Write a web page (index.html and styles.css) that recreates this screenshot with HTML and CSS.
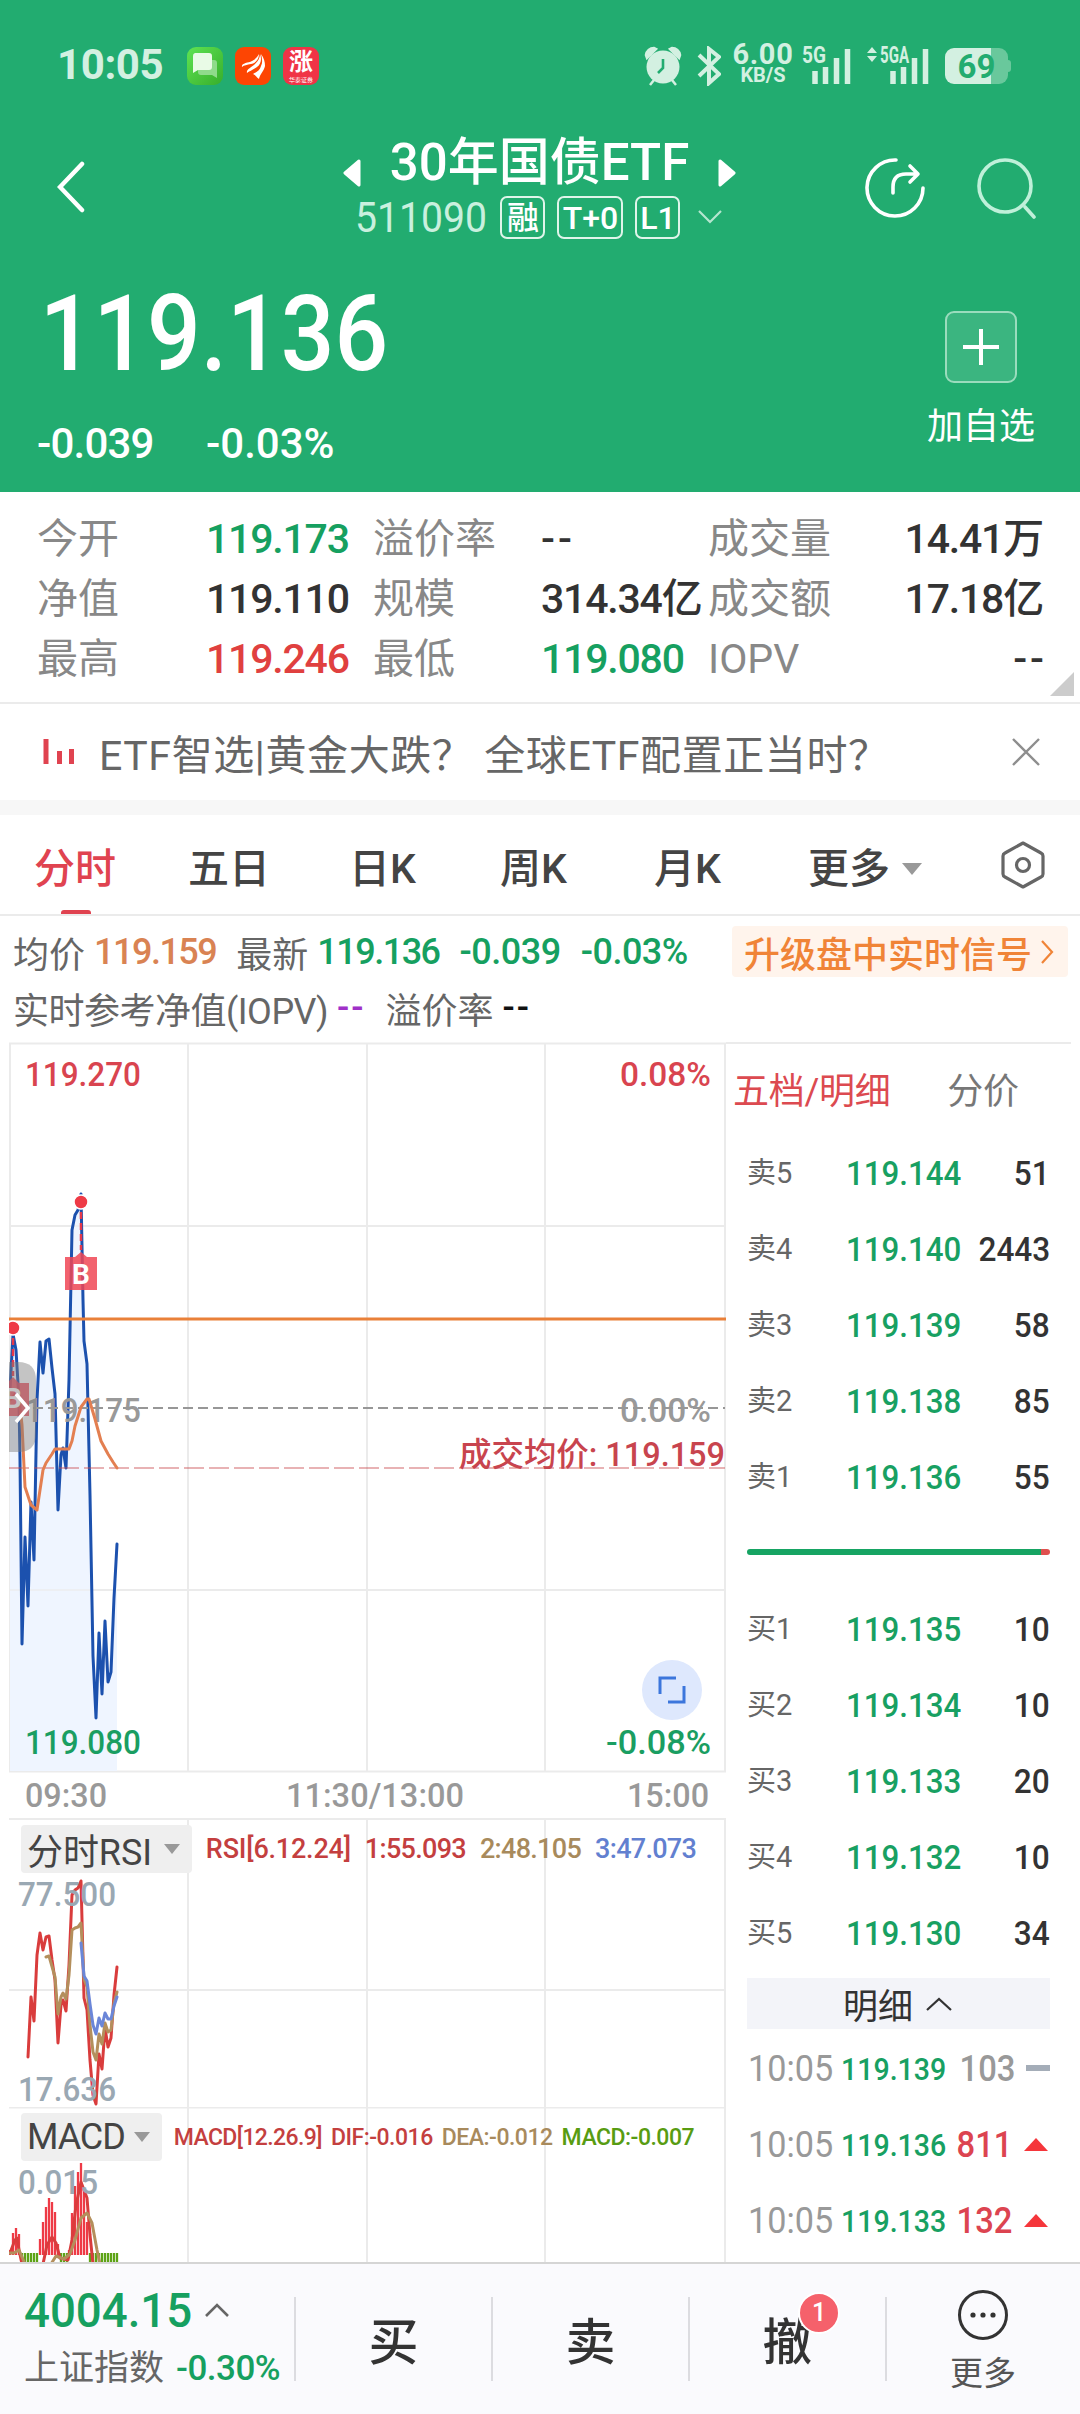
FILE: index.html
```html
<!DOCTYPE html>
<html lang="zh-CN">
<head>
    <meta charset="UTF-8">
    <meta name="viewport" content="width=device-width, initial-scale=1.0">
    <title>30年国债ETF 511090</title>
    <link rel="stylesheet" href="styles.css">
</head>
<body>
    <header class="header">
        <div class="status-bar">
            <span class="clock">10:05</span>
            <div class="app-icons">
                <svg width="36" height="38" viewBox="0 0 36 38">
                    <defs><linearGradient id="msg" x1="0" y1="0" x2="1" y2="1"><stop offset="0" stop-color="#5fe353"/><stop offset="1" stop-color="#37ae2b"/></linearGradient></defs>
                    <rect width="36" height="38" rx="9" fill="url(#msg)"/>
                    <path d="M14 13h13a3 3 0 0 1 3 3v15l-5-3H14a3 3 0 0 1-3-3V16a3 3 0 0 1 3-3z" fill="#8fdb8b"/>
                    <path d="M8 6h14a3 3 0 0 1 3 3v11a3 3 0 0 1-3 3H11l-5 3V9a3 3 0 0 1 2-3z" fill="#e9fbe6"/>
                </svg>
                <svg width="36" height="38" viewBox="0 0 36 38">
                    <rect width="36" height="38" rx="9" fill="#fd4503"/>
                    <path d="M7 20c-1-4 6-4 10-6 4-2 6-5 7-7 0 6-4 9-8 10s-7 1-9 3z" fill="#fff"/>
                    <path d="M12 26c-1-4 4-5 8-9 3-3 5-6 5-10 2 5 1 10-3 13-4 3-8 4-10 6z" fill="#fff"/>
                    <path d="M24 32c-3-2-3-4-6-5 4-2 7-4 8-8 2-4 1-8 0-12 3 4 4 8 4 12-1 5-5 8-6 13z" fill="#fff"/>
                </svg>
                <div class="app-zhang"><b>涨</b><i>华泰证券</i></div>
            </div>
            <div class="status-right">
                <svg class="alarm" width="38" height="40" viewBox="0 0 38 40">
                    <circle cx="19" cy="21" r="16.5" fill="#d3f0e1"/>
                    <path d="M2 9a8 8 0 0 1 8-7l2 1-9 9zM36 9a8 8 0 0 0-8-7l-2 1 9 9zM10 34l-4 5M28 34l4 5" fill="#d3f0e1" stroke="#d3f0e1" stroke-width="2.5"/>
                    <path d="M19 13v9l-5 5" fill="none" stroke="#22ac70" stroke-width="2.6"/>
                </svg>
                <svg class="bluetooth" width="24" height="40" viewBox="0 0 24 40">
                    <path d="M2 9l20 19-10 9V3l10 8L2 30" fill="none" stroke="#d3f0e1" stroke-width="4"/>
                </svg>
                <div class="speed"><span>6.00</span><small>KB/S</small></div>
                <svg class="signal" width="50" height="40" viewBox="0 0 50 40">
                    <text x="0" y="18" textLength="24" lengthAdjust="spacingAndGlyphs">5G</text>
                    <path d="M13 39V26M23.500 39V22M34.500 39V13M45.500 39V4" class="signal-bars"/>
                </svg>
                <svg class="signal signal-2" width="62" height="40" viewBox="0 0 62 40">
                    <path d="M0 8l5-6 5 6zM0 11h10l-5 6z" fill="#d3f0e1"/>
                    <text x="13" y="18" textLength="29" lengthAdjust="spacingAndGlyphs">5GA</text>
                    <path d="M26 39V26M36.500 39V22M47.500 39V13M58.500 39V4" class="signal-bars"/>
                </svg>
                <div class="battery"><span>69</span></div>
            </div>
        </div>

        <nav class="nav">
            <svg class="back" width="29" height="54" viewBox="0 0 29 54"><path d="M25 4L3 27l22 23" fill="none" stroke="#fff" stroke-width="4.500" stroke-linecap="round"/></svg>
            <div class="nav-center">
                <div class="title-row">
                    <svg width="18" height="28" viewBox="0 0 18 28"><path d="M16 2L2 14l14 12z" fill="#fff" stroke="#fff" stroke-width="3" stroke-linejoin="round"/></svg>
                    <h1>30年国债ETF</h1>
                    <svg width="18" height="28" viewBox="0 0 18 28"><path d="M2 2l14 12L2 26z" fill="#fff" stroke="#fff" stroke-width="3" stroke-linejoin="round"/></svg>
                </div>
                <div class="code-row">
                    <span class="code">511090</span>
                    <span class="tag">融</span>
                    <span class="tag tag-wide">T+0</span>
                    <span class="tag">L1</span>
                    <svg width="26" height="16" viewBox="0 0 26 16"><path d="M2 2l11 11L24 2" fill="none" stroke="#b5e6cf" stroke-width="2.200"/></svg>
                </div>
            </div>
            <div class="nav-icons">
                <svg width="60" height="62" viewBox="0 0 60 62" fill="none" stroke="#fff" stroke-width="3.600" stroke-linecap="round" stroke-linejoin="round">
                    <path d="M31 3a28 28 0 1 0 27 28"/><path d="M28 36v-6q0-13 13-13h11M45 9l8 8-8 8"/>
                </svg>
                <svg width="60" height="62" viewBox="0 0 60 62" fill="none" stroke="#bff0d9" stroke-width="3.600" stroke-linecap="round">
                    <circle cx="28" cy="29" r="26"/><path d="M48 50l9 10"/>
                </svg>
            </div>
        </nav>

        <div class="quote">
            <div>
                <div class="price">119.136</div>
                <div class="change"><span>-0.039</span><span>-0.03%</span></div>
            </div>
            <div class="add">
                <div class="add-box"><svg width="36" height="36" viewBox="0 0 36 36"><path d="M18 0v36M0 18h36" stroke="#fff" stroke-width="4"/></svg></div>
                <span>加自选</span>
            </div>
        </div>
    </header>

    <section class="stats">
        <span class="label">今开</span><span class="green">119.173</span><span class="label">溢价率</span><span class="none">--</span><span class="label">成交量</span><span class="right">14.41万</span>
        <span class="label">净值</span><span>119.110</span><span class="label">规模</span><span>314.34亿</span><span class="label">成交额</span><span class="right">17.18亿</span>
        <span class="label">最高</span><span class="red">119.246</span><span class="label">最低</span><span class="green">119.080</span><span class="label">IOPV</span><span class="right none">--</span>
        <i class="corner"></i>
    </section>

    <section class="notice">
        <svg width="32" height="28" viewBox="0 0 32 28"><path d="M3 1v25M16.500 13v13M28.500 11v15" stroke="#e04350" stroke-width="5"/></svg>
        <p>ETF智选|黄金大跌？ 全球ETF配置正当时？</p>
        <svg width="28" height="28" viewBox="0 0 28 28"><path d="M1 1l26 26M27 1L1 27" stroke="#8e8e8e" stroke-width="2.400"/></svg>
    </section>

    <nav class="tabs">
        <a class="active">分时</a>
        <a>五日</a>
        <a>日K</a>
        <a>周K</a>
        <a>月K</a>
        <a>更多<i class="caret"></i></a>
        <svg width="44" height="48" viewBox="0 0 44 48" fill="none" stroke="#666" stroke-width="3.200" stroke-linejoin="round"><path d="M22 2l18 10q2 1 2 3v18q0 2-2 3L22 46 4 36q-2-1-2-3V15q0-2 2-3z"/><circle cx="22" cy="24" r="6.500"/></svg>
    </nav>

    <section class="info">
        <div class="info-row">
            <span>均价</span><span class="num orange">119.159</span><span class="latest">最新</span><span class="num green">119.136</span><span class="num green chg">-0.039</span><span class="num green chg">-0.03%</span>
            <a class="upgrade">升级盘中实时信号<svg width="14" height="26" viewBox="0 0 14 26"><path d="M2 2l10 11L2 24" fill="none" stroke="#f08437" stroke-width="2.200"/></svg></a>
        </div>
        <div class="info-row second">
            <span class="iopv">实时参考净值(IOPV)</span><span class="num none purple">--</span><span class="latest">溢价率</span><span class="num none black">--</span>
        </div>
    </section>

    <main class="main">
        <div class="charts">
            <!-- minute price chart -->
            <div class="panel price-panel">
                <svg width="717" height="776" viewBox="9 1042 717 776">
                    <path class="grid" d="M9 1043.500h717M10 1043v728M188 1043v728M367 1043v728M545 1043v728M725 1043v728M9 1226h717M9 1590h717M9 1771.500h717"/>
                    <path fill="#eff5ff" d="M10 1771V1390L13 1334 16 1350 19 1400 20 1460 22 1644 25 1537 28 1606 31 1502 34 1560 37 1400 40 1342 43 1373 46 1341 49 1339 52 1368 55 1394 58 1510 61 1455 63 1448 66 1468 69 1380 72 1230 75 1215 78 1210 81 1194 83 1300 84 1341 87 1364 90 1495 93 1656 96 1718 99 1633 102 1694 105 1621 108 1682 111 1672 114 1598 117 1544V1771z"/>
                    <path class="grid" opacity=".6" d="M9 1226h110M9 1590h110"/>
                    <path class="line" stroke="#1c51ae" stroke-width="3.600" d="M10 1390L13 1334 16 1350 19 1400 20 1460 22 1644 25 1537 28 1606 31 1502 34 1560 37 1400 40 1342 43 1373 46 1341 49 1339 52 1368 55 1394 58 1510 61 1455 63 1448 66 1468 69 1380 72 1230 75 1215 78 1210 81 1194 83 1300 84 1341 87 1364 90 1495 93 1656 96 1718 99 1633 102 1694 105 1621 108 1682 111 1672 114 1598 117 1544"/>
                    <text class="axis gray" x="25" y="1422" textLength="116" lengthAdjust="spacingAndGlyphs">119.175</text>
                    <text class="axis gray end" x="711" y="1422" textLength="91" lengthAdjust="spacingAndGlyphs">0.00%</text>
                    <path d="M33 1408H725" stroke="#979797" stroke-width="2" stroke-dasharray="10 5"/>
                    <path d="M9 1468H725" stroke="#c9484d" stroke-opacity=".42" stroke-width="2" stroke-dasharray="20 5"/>
                    <path class="line" stroke="#e37f51" stroke-width="3" d="M10 1400L18 1391 22 1425 25 1487 31 1505 37 1510 43 1470 46 1463 52 1454 55 1449 69 1449 72 1441 75 1426 81 1407 87 1399 89 1399 95 1419 101 1441 108 1454 113 1462 117 1468"/>
                    <path d="M9 1319H726" stroke="#e98039" stroke-width="3"/>
                    <path d="M81 1212v38M13 1338v38" stroke="#e6394a" stroke-width="2.500" stroke-dasharray="7 4"/>
                    <circle cx="81" cy="1202" r="7" fill="#ee3a46" stroke="#fff" stroke-width="1.500"/>
                    <circle cx="13" cy="1328" r="7" fill="#ee3a46" stroke="#fff" stroke-width="1.500"/>
                    <path d="M65 1257h10l6-5 6 5h10v33H65z" fill="#f04655" fill-opacity=".85"/>
                    <text class="mark" x="81" y="1284">B</text>
                    <path d="M9 1381l4-4 6 6h10v33H9z" fill="#f04655" fill-opacity=".85"/>
                    <text class="mark" x="13" y="1408">B</text>
                    <path d="M9 1362h9q18 0 18 18v54q0 18-18 18H9z" fill="#7d7d7d" fill-opacity=".45"/>
                    <path d="M16 1394l12 14-12 14" fill="none" stroke="#fff" stroke-width="3.500"/>
                    <text class="axis up" x="25" y="1086" textLength="116" lengthAdjust="spacingAndGlyphs">119.270</text>
                    <text class="axis up end" x="711" y="1086" textLength="91" lengthAdjust="spacingAndGlyphs">0.08%</text>
                    <text class="axis down" x="25" y="1754" textLength="116" lengthAdjust="spacingAndGlyphs">119.080</text>
                    <text class="axis down end" x="711" y="1754" textLength="105" lengthAdjust="spacingAndGlyphs">-0.08%</text>
                    <text class="axis cost end" x="725" y="1466" textLength="266" lengthAdjust="spacingAndGlyphs">成交均价: 119.159</text>
                    <circle cx="672" cy="1690" r="30" fill="#dee8fd"/>
                    <path d="M676 1678h-16v16M668 1702h16v-16" fill="none" stroke="#3c76dc" stroke-width="3"/>
                    <text class="axis gray" x="25" y="1807" textLength="82" lengthAdjust="spacingAndGlyphs">09:30</text>
                    <text class="axis gray middle" x="375" y="1807" textLength="178" lengthAdjust="spacingAndGlyphs">11:30/13:00</text>
                    <text class="axis gray end" x="709" y="1807" textLength="82" lengthAdjust="spacingAndGlyphs">15:00</text>
                </svg>
            </div>

            <div class="panel rsi-panel">
                <svg width="717" height="289" viewBox="9 1818 717 289">
                    <path class="grid" d="M9 1819h717M188 1819v288M367 1819v288M545 1819v288M725 1819v288M9 1990h717"/>
                    <path class="line" stroke="#d93c3c" d="M28 2057L31 1997 34 2021 37 1955 40 1933 43 1950 46 1937 49 1936 52 1960 55 1980 58 2043 61 2005 63 2000 66 2011 69 1965 72 1895 75 1890 78 1888 81 1881 84 1998 87 2010 90 2060 93 2095 96 2104 99 2054 102 2069 105 2028 108 2047 111 2038 114 1995 117 1967"/>
                    <path class="line" stroke="#b48f5c" d="M46 1957L49 1956 55 1977 58 2014 61 1997 63 1993 66 1999 69 1975 72 1930 75 1928 78 1927 81 1923 84 1979 87 1987 90 2025 93 2052 96 2060 99 2034 102 2044 105 2023 108 2032 111 2030 114 2003 117 1992"/>
                    <path class="line" stroke="#6b86d8" d="M81 1943L84 1976 87 1981 90 2004 93 2025 96 2034 99 2018 102 2026 105 2013 108 2019 111 2019 114 2006 117 1997"/>
                    <text class="axis scale" x="18" y="1906" textLength="98" lengthAdjust="spacingAndGlyphs">77.500</text>
                    <text class="axis scale" x="18" y="2101" textLength="98" lengthAdjust="spacingAndGlyphs">17.636</text>
                </svg>
                <div class="legend">
                    <span class="picker">分时RSI<i class="caret"></i></span>
                    <span class="c-red">RSI[6.12.24]</span><span class="c-red">1:55.093</span><span class="c-tan">2:48.105</span><span class="c-blue">3:47.073</span>
                </div>
            </div>

            <div class="panel macd-panel">
                <svg width="717" height="155" viewBox="9 2107 717 155">
                    <path class="grid" d="M9 2107.500h717M188 2107v156M367 2107v156M545 2107v156M725 2107v156"/>
                    <path stroke="#ee3a46" stroke-width="2.300" d="M10 2255v-5M13 2255v-22M16 2255v-27M19 2255v-21M40 2255v-16M43 2255v-33M46 2255v-48M49 2255v-57M52 2255v-53M55 2255v-43M58 2255v-11M69 2255v-5M72 2255v-42M75 2255v-69M78 2255v-83M81 2255v-92M84 2255v-65M87 2255v-33"/>
                    <path stroke="#5da316" stroke-width="2.300" d="M22 2253v9M25 2253v9M28 2253v9M31 2253v9M34 2253v9M37 2253v9M61 2253v9M64 2253v9M67 2253v9M90 2253v9M93 2253v9M96 2253v9M99 2253v9M102 2253v9M105 2253v9M108 2253v9M111 2253v9M114 2253v9M117 2253v9"/>
                    <path class="line" stroke="#d93c3c" d="M10 2253L15 2240 17 2238 19 2250 22 2264M43 2264L47 2245 52 2237 56 2243 60 2258 68 2260 72 2240 76 2205 81 2182 87 2198 90 2235 93 2264"/>
                    <path class="line" stroke="#b48f5c" d="M10 2253L14 2253 19 2250 25 2264M51 2264L56 2256 64 2259 70 2254 75 2240 81 2218 87 2213 92 2223 97 2250 100 2264"/>
                    <text class="axis scale" x="18" y="2194" textLength="80" lengthAdjust="spacingAndGlyphs">0.015</text>
                </svg>
                <div class="legend legend-macd">
                    <span class="picker">MACD<i class="caret"></i></span>
                    <span class="c-red">MACD[12.26.9]</span><span class="c-red">DIF:-0.016</span><span class="c-tan">DEA:-0.012</span><span class="c-green">MACD:-0.007</span>
                </div>
            </div>
        </div>

        <aside class="depth">
            <div class="depth-tabs"><a class="active">五档/明细</a><a>分价</a></div>
            <div class="book">
                <div class="level"><span>卖5</span><b>119.144</b><em>51</em></div>
                <div class="level"><span>卖4</span><b>119.140</b><em>2443</em></div>
                <div class="level"><span>卖3</span><b>119.139</b><em>58</em></div>
                <div class="level"><span>卖2</span><b>119.138</b><em>85</em></div>
                <div class="level"><span>卖1</span><b>119.136</b><em>55</em></div>
                <div class="ratio"><i></i></div>
                <div class="level"><span>买1</span><b>119.135</b><em>10</em></div>
                <div class="level"><span>买2</span><b>119.134</b><em>10</em></div>
                <div class="level"><span>买3</span><b>119.133</b><em>20</em></div>
                <div class="level"><span>买4</span><b>119.132</b><em>10</em></div>
                <div class="level"><span>买5</span><b>119.130</b><em>34</em></div>
            </div>
            <div class="detail-head">明细<svg width="26" height="14" viewBox="0 0 26 14"><path d="M1 13L13 2l12 11" fill="none" stroke="#333" stroke-width="2.200"/></svg></div>
            <div class="tick"><span>10:05</span><b>119.139</b><em class="flat">103</em><i class="dash"></i></div>
            <div class="tick"><span>10:05</span><b>119.136</b><em>811</em><i class="up-arrow"></i></div>
            <div class="tick"><span>10:05</span><b>119.133</b><em>132</em><i class="up-arrow"></i></div>
        </aside>
    </main>

    <footer class="footer">
        <div class="index">
            <div class="index-value"><span>4004.15</span><svg width="24" height="15" viewBox="0 0 24 15"><path d="M1 13L12 2l11 11" fill="none" stroke="#666" stroke-width="2.600"/></svg></div>
            <div class="index-name">上证指数<span>-0.30%</span></div>
        </div>
        <a class="action">买</a>
        <a class="action">卖</a>
        <a class="action">撤<span class="badge">1</span></a>
        <a class="more">
            <svg width="52" height="52" viewBox="0 0 52 52"><circle cx="26" cy="26" r="23.500" fill="none" stroke="#333" stroke-width="3"/><circle cx="16" cy="26" r="2.600" fill="#333"/><circle cx="26" cy="26" r="2.600" fill="#333"/><circle cx="36" cy="26" r="2.600" fill="#333"/></svg>
            <span>更多</span>
        </a>
    </footer>
</body>
</html>
```
FILE: styles.css
```css
* {
    box-sizing: border-box;
}
body {
    margin: 0;
    width: 1080px;
    height: 2414px;
    overflow: hidden;
    background: #fff;
    color: #333;
    font-family: Roboto, "Noto Sans CJK SC", sans-serif;
}
svg {
    display: block;
    flex: none;
}
i, em {
    font-style: normal;
}
b {
    font-weight: 500;
}
.green { color: #16a060; }
.red { color: #e0403f; }
.orange { color: #d98353; }
.purple { color: #a030c8; }
.black { color: #111; }

/* header */
.header {
    height: 492px;
    background: #22ac70;
    color: #fff;
}
.status-bar {
    display: flex;
    align-items: center;
    height: 132px;
    padding: 0 72px 4px 57px;
    color: #d3f0e1;
}
.clock {
    width: 130px;
    font-size: 42px;
    font-weight: 700;
    letter-spacing: -.4px;
}
.app-icons {
    display: flex;
    gap: 12px;
    margin-top: 4px;
}
.app-zhang {
    width: 36px;
    height: 38px;
    border-radius: 9px;
    background: #f03446;
    color: #fff;
    text-align: center;
    overflow: hidden;
}
.app-zhang b {
    display: block;
    font-size: 24px;
    font-weight: 700;
    line-height: 30px;
}
.app-zhang i {
    display: block;
    font-size: 6px;
    line-height: 5px;
}
.status-right {
    display: flex;
    align-items: center;
    margin-left: auto;
}
.alarm, .bluetooth {
    margin-top: 3px;
}
.bluetooth {
    margin-left: 15px;
}
.speed {
    display: flex;
    flex-direction: column;
    align-items: center;
    width: 62px;
    margin: 0 8px 0 11px;
    font-weight: 700;
}
.speed span {
    font-size: 29px;
    line-height: 23px;
    letter-spacing: .7px;
}
.speed small {
    font-size: 20px;
    line-height: 19px;
}
.signal {
    overflow: visible;
    margin-top: 2px;
}
.signal text {
    font-size: 23px;
    font-weight: 700;
    fill: #d3f0e1;
}
.signal-bars {
    stroke: #d3f0e1;
    stroke-width: 5.5;
    fill: none;
}
.signal-2 {
    margin-left: 15px;
}
.battery {
    position: relative;
    width: 63px;
    height: 36px;
    margin-top: 3px;
    margin-left: 16px;
    border-radius: 9px;
    background: linear-gradient(90deg, #d3f0e1 46px, #69c89c 46px);
    color: #22ac70;
    font-size: 33px;
    font-weight: 700;
    line-height: 37px;
    text-align: center;
}
.battery::after {
    content: "";
    position: absolute;
    right: -3px;
    top: 12px;
    width: 3px;
    height: 12px;
    border-radius: 0 3px 3px 0;
    background: #69c89c;
}

.nav {
    display: grid;
    grid-template-columns: 1fr auto 1fr;
    height: 128px;
    padding: 0 43px 0 57px;
}
.back {
    margin-top: 28px;
}
.nav-center {
    display: flex;
    flex-direction: column;
    align-items: center;
    margin-left: -15px;
}
.title-row {
    display: flex;
    align-items: center;
    height: 64px;
    gap: 29px;
}
.title-row svg {
    margin-top: 17px;
}
.title-row h1 {
    margin: -2px 0 0;
    font-size: 51px;
    font-weight: 500;
    line-height: 64px;
}
.code-row {
    display: flex;
    align-items: center;
    height: 52px;
    margin-top: -5px;
}
.code {
    margin-right: 0;
    font-size: 43px;
    color: #c9f0de;
    line-height: 52px;
    transform: scaleX(.91);
    transform-origin: left;
}
.tag {
    width: 45px;
    height: 43px;
    margin-right: 12px;
    border: 2px solid #dff5ea;
    border-radius: 7px;
    font-size: 32px;
    font-weight: 500;
    line-height: 40px;
    text-align: center;
}
.tag-wide {
    width: 66px;
}
.code-row svg {
    margin-left: 5px;
}
.nav-icons {
    display: flex;
    justify-content: flex-end;
    gap: 52px;
    padding-top: 25px;
}

.quote {
    display: flex;
    justify-content: space-between;
    padding: 0 45px 0 37px;
}
.price {
    height: 145px;
    padding: 2px 0 0 3px;
    font-size: 105px;
    font-weight: 500;
    line-height: 145px;
    transform: scaleX(.9);
    transform-origin: left;
}
.change {
    display: flex;
    margin-top: 12px;
    font-size: 42px;
    font-weight: 500;
    line-height: 54px;
}
.change span {
    width: 169px;
}
.change span:first-child {
    letter-spacing: -.8px;
}
.add {
    display: flex;
    flex-direction: column;
    align-items: center;
    padding-top: 51px;
    font-size: 36px;
    line-height: 54px;
}
.add-box {
    display: flex;
    align-items: center;
    justify-content: center;
    width: 72px;
    height: 72px;
    margin-bottom: 17px;
    border: 2px solid #9adcbd;
    border-radius: 9px;
    background: #3bb580;
}

/* key figures */
.stats {
    position: relative;
    display: grid;
    grid-template-columns: 169px 167px 168px 167px 150px 1fr;
    grid-auto-rows: 60px;
    height: 212px;
    padding: 17px 37px 0;
    border-bottom: 2px solid #ebebeb;
    font-size: 41px;
    font-weight: 500;
    line-height: 60px;
    letter-spacing: -1.2px;
    white-space: nowrap;
}
.stats .label {
    color: #888;
    font-weight: 400;
    letter-spacing: 0;
}
.stats .right {
    text-align: right;
}
.stats .none {
    letter-spacing: 3px;
}
.stats .right.none {
    margin-right: -4px;
}
.corner {
    position: absolute;
    right: 6px;
    bottom: 6px;
    border-left: 24px solid transparent;
    border-bottom: 24px solid #ccc;
}
.notice {
    display: flex;
    align-items: center;
    height: 96px;
    padding: 0 40px 0 43px;
    color: #666;
    font-size: 41px;
}
.notice p {
    flex: 1;
    margin: 0 0 0 24px;
    letter-spacing: .6px;
}

/* period tabs */
.tabs {
    display: grid;
    grid-template-columns: 154px 161px 151px 154px 154px 1fr 44px;
    align-items: center;
    height: 116px;
    padding: 0 35px 0 34px;
    border-top: 15px solid #f7f7f7;
    border-bottom: 2px solid #ebebeb;
    color: #444;
    font-size: 41px;
    font-weight: 500;
}
.tabs a {
    position: relative;
}
.tabs a.active {
    color: #e04350;
}
.tabs a.active::after {
    content: "";
    position: absolute;
    left: 27px;
    bottom: -19px;
    width: 30px;
    height: 4px;
    border-radius: 3px 3px 0 0;
    background: #e04350;
}
.caret {
    display: inline-block;
    border: 10px solid transparent;
    border-top: 12px solid #999;
    border-bottom: 0;
}
.tabs .caret {
    margin-left: 12px;
    vertical-align: 8px;
}

.info {
    height: 126px;
    padding: 9px 12px 0 13px;
    color: #666;
    font-size: 36px;
}
.info-row {
    display: flex;
    align-items: center;
    height: 53px;
}
.info-row .num {
    margin-left: 9px;
    font-weight: 500;
    letter-spacing: -1.5px;
}
.info-row .latest, .info-row .chg {
    margin-left: 20px;
}
.info-row .chg {
    letter-spacing: -.5px;
}
.info-row .none {
    letter-spacing: 2px;
}
.iopv {
    letter-spacing: -.5px;
}
.second {
    margin-top: 3px;
}
.upgrade {
    display: flex;
    align-items: center;
    justify-content: space-between;
    width: 336px;
    height: 51px;
    margin-left: auto;
    padding: 0 14px 0 12px;
    border-radius: 4px;
    background: #fff4ec;
    color: #f08437;
    font-weight: 500;
}

/* charts */
.main {
    display: flex;
    height: 1220px;
    padding-left: 9px;
    overflow: hidden;
}
.charts {
    width: 717px;
}
.panel {
    position: relative;
}
.grid {
    fill: none;
    stroke: #ebebeb;
    stroke-width: 2;
}
.line {
    fill: none;
    stroke-width: 3;
    stroke-linejoin: round;
    stroke-linecap: round;
}
.axis {
    font-size: 34px;
    font-weight: 500;
}
.axis.up { fill: #d9444f; }
.axis.down { fill: #1a9e62; }
.axis.gray { fill: #999; }
.axis.cost { fill: #c8444e; font-size: 33px; }
.axis.scale { fill: #9aa8b3; }
.axis.end { text-anchor: end; }
.axis.middle { text-anchor: middle; }
.mark {
    fill: #fff;
    font-size: 28px;
    font-weight: 700;
    text-anchor: middle;
}
.legend {
    position: absolute;
    left: 12px;
    top: 7px;
    display: flex;
    align-items: center;
    gap: 14px;
    font-size: 27px;
    font-weight: 500;
    letter-spacing: -.7px;
    white-space: nowrap;
}
.legend .c-red:nth-child(2) {
    letter-spacing: -.2px;
}
.legend-macd {
    top: 6px;
    gap: 9px;
    font-size: 23px;
    letter-spacing: -.5px;
}
.legend-macd .c-red:nth-child(2) {
    margin-left: 3px;
    letter-spacing: -.6px;
}
.picker {
    display: flex;
    align-items: center;
    gap: 12px;
    height: 48px;
    padding: 0 12px 0 6px;
    border-radius: 4px;
    background: #efefef;
    color: #444;
    font-size: 36px;
    font-weight: 400;
    letter-spacing: -.1px;
}
.legend-macd .picker {
    gap: 9px;
    letter-spacing: -1.1px;
}
.picker .caret {
    border-width: 10px 8px 0;
}
.c-red { color: #c43f3f; }
.c-tan { color: #a88a5c; }
.c-blue { color: #6280d0; }
.c-green { color: #589c12; }

/* order book */
.depth {
    width: 345px;
    padding: 0 21px;
    border-top: 2px solid #ebebeb;
}
.depth-tabs {
    display: flex;
    gap: 57px;
    height: 91px;
    margin-left: -14px;
    color: #777;
    font-size: 36px;
    line-height: 97px;
    letter-spacing: -.3px;
    white-space: nowrap;
}
.depth-tabs .active {
    color: #dc4a50;
}
.level {
    display: grid;
    grid-template-columns: 99px 126px 1fr;
    height: 76px;
    line-height: 76px;
    font-size: 34px;
    font-weight: 500;
}
.level span {
    color: #666;
    font-size: 29px;
    font-weight: 400;
}
.level b, .tick b {
    color: #18a062;
    transform: scaleX(.92);
    transform-origin: left;
}
.level em {
    justify-self: end;
    transform: scaleX(.93);
    transform-origin: right;
}
.ratio {
    height: 76px;
    padding-top: 34px;
}
.ratio i {
    display: block;
    height: 6px;
    border-radius: 3px;
    background: linear-gradient(90deg, #16a463 294px, #e0504f 294px);
}
.detail-head {
    display: flex;
    align-items: center;
    justify-content: center;
    gap: 13px;
    height: 51px;
    margin: 7px 0 2px;
    padding-right: 2px;
    background: #f3f4f9;
    font-size: 35px;
}
.tick {
    display: grid;
    grid-template-columns: 94px 101px 1fr 36px;
    align-items: center;
    justify-items: end;
    height: 76px;
    font-size: 36px;
}
.tick span, .tick b {
    justify-self: start;
}
.tick span {
    padding-left: 1px;
    color: #999;
    transform: scaleX(.95);
    transform-origin: left;
}
.tick b {
    font-size: 31px;
}
.tick em {
    margin-right: 2px;
    color: #dc4450;
    font-weight: 500;
    transform: scaleX(.91);
    transform-origin: right;
}
.tick .flat {
    color: #999;
    margin-right: -1px;
}
.dash {
    width: 24px;
    height: 6px;
    margin-bottom: 2px;
    background: #a4adb8;
}
.up-arrow {
    margin-right: 2px;
    margin-bottom: 2px;
    border: 12px solid transparent;
    border-top: 0;
    border-bottom: 13px solid #f5363b;
}

/* bottom bar */
.footer {
    display: flex;
    height: 152px;
    border-top: 2px solid #d5d5d5;
    background: #fafafd;
}
.index {
    flex: none;
    width: 295px;
    padding: 16px 0 0 24px;
}
.index-value {
    display: flex;
    align-items: center;
    gap: 4px;
    height: 60px;
    color: #16a060;
    font-size: 48px;
    font-weight: 500;
}
.index-value span {
    transform: scaleX(.95);
    transform-origin: left;
}
.index-name {
    color: #666;
    font-size: 35px;
    line-height: 57px;
    white-space: nowrap;
}
.index-name span {
    margin-left: 12px;
    color: #16a060;
    font-weight: 500;
    letter-spacing: -.5px;
}
.action, .more {
    position: relative;
    flex: none;
    width: 197px;
}
.action {
    padding-top: 40px;
    font-size: 50px;
    font-weight: 500;
    line-height: 78px;
    text-align: center;
}
.action::before, .more::before {
    content: "";
    position: absolute;
    left: -1px;
    top: 33px;
    width: 2px;
    height: 84px;
    background: #dcdce0;
}
.badge {
    position: absolute;
    left: 109px;
    top: 28px;
    width: 42px;
    height: 42px;
    border: 2px solid #fff;
    border-radius: 50%;
    background: #f5616b;
    color: #fff;
    font-size: 25px;
    line-height: 38px;
}
.more {
    display: flex;
    flex-direction: column;
    align-items: center;
    width: 194px;
    padding-top: 25px;
    color: #555;
    font-size: 33px;
    line-height: 66px;
}
```
